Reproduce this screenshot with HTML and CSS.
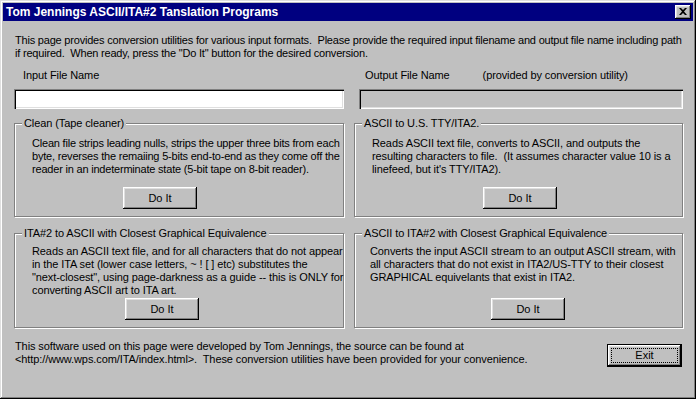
FILE: index.html
```html
<!DOCTYPE html>
<html lang="en">
<head>
    <meta charset="UTF-8">
    <title>Tom Jennings ASCII/ITA#2 Tanslation Programs</title>
    <link rel="stylesheet" href="styles.css">
</head>
<body>

<div class="window">
    <div class="titlebar">
        <span class="title">Tom Jennings ASCII/ITA#2 Tanslation Programs</span>
        <button class="close-btn" type="button">
            <svg width="8" height="7" viewBox="0 0 8 7"><path d="M0 0h2l2 2 2-2h2L5 3.5 8 7H6L4 5 2 7H0l3-3.5z" fill="#000"/></svg>
        </button>
    </div>

    <div class="content">
        <p class="intro">This page provides conversion utilities for various input formats.&nbsp; Please provide the required input filename and output file name including path<br>if required.&nbsp; When ready, press the "Do It" button for the desired conversion.</p>

        <div class="files">
            <label class="file-label" for="inFile">Input File Name</label>
            <label class="file-label out" for="outFile">Output File Name <span class="note">(provided by conversion utility)</span></label>
            <input class="field" id="inFile" type="text">
            <input class="field out" id="outFile" type="text" readonly>
        </div>

        <div class="groups">
            <fieldset class="group g-clean">
                <legend>Clean (Tape cleaner)</legend>
                <p class="desc">Clean file strips leading nulls, strips the upper three bits from each<br>byte, reverses the remaiing 5-bits end-to-end as they come off the<br>reader in an indeterminate state (5-bit tape on 8-bit reader).</p>
                <button class="btn" type="button">Do It</button>
            </fieldset>

            <fieldset class="group g-tty">
                <legend>ASCII to U.S. TTY/ITA2.</legend>
                <p class="desc">Reads ASCII text file, converts to ASCII, and outputs the<br>resulting characters to file.&nbsp; (It assumes character value 10 is a<br>linefeed, but it's TTY/ITA2).</p>
                <button class="btn" type="button">Do It</button>
            </fieldset>

            <fieldset class="group g-ita">
                <legend>ITA#2 to ASCII with Closest Graphical Equivalence</legend>
                <p class="desc">Reads an ASCII text file, and for all characters that do not appear<br>in the ITA set (lower case letters, ~ ! [ ] etc) substitutes the<br>"next-closest", using page-darkness as a guide -- this is ONLY for<br>converting ASCII art to ITA art.</p>
                <button class="btn" type="button">Do It</button>
            </fieldset>

            <fieldset class="group g-ascii">
                <legend>ASCII to ITA#2 with Closest Graphical Equivalence</legend>
                <p class="desc">Converts the input ASCII stream to an output ASCII stream, with<br>all characters that do not exist in ITA2/US-TTY to their closest<br>GRAPHICAL equivelants that exist in ITA2.</p>
                <button class="btn" type="button">Do It</button>
            </fieldset>
        </div>

        <div class="footer">
            <p class="credits">This software used on this page were developed by Tom Jennings, the source can be found at<br>&lt;http://www.wps.com/ITA/index.html&gt;.&nbsp; These conversion utilities have been provided for your convenience.</p>
            <button class="btn exit" type="button"><span class="focus">Exit</span></button>
        </div>
    </div>
</div>

</body>
</html>
```

FILE: styles.css
```css
body {
    margin: 0;
    font-family: "Liberation Sans", Arial, sans-serif;
    font-size: 11px;
    line-height: 13px;
    letter-spacing: -0.1px;
    color: #000;
    background-color: #c0c0c0;
}

.window {
    width: 696px;
    height: 399px;
    box-sizing: border-box;
    padding: 3px;
    background-color: #c0c0c0;
    box-shadow: inset -1px -1px #000, inset 1px 1px #dfdfdf,
                inset -2px -2px #808080, inset 2px 2px #fff;
}

/* title bar */
.titlebar {
    height: 18px;
    display: flex;
    align-items: center;
    justify-content: space-between;
    padding: 0 2px 0 3px;
    background-color: #000080;
}

.title {
    color: #fff;
    font-weight: bold;
    font-size: 12px;
    letter-spacing: 0;
}

.close-btn {
    width: 16px;
    height: 14px;
    padding: 0;
    border: none;
    display: flex;
    align-items: center;
    justify-content: center;
    background-color: #c0c0c0;
    box-shadow: inset -1px -1px #000, inset 1px 1px #fff,
                inset -2px -2px #808080, inset 2px 2px #dfdfdf;
}

.close-btn svg {
    display: block;
    margin-top: -1px;
}

/* main area */
.content {
    padding: 0 11px 0 11px;
}

p {
    margin: 0;
    white-space: nowrap;
}

.intro {
    margin-top: 13px;
    padding-left: 1px;
    letter-spacing: -0.2px;
}

.files {
    display: grid;
    grid-template-columns: 330px 330px;
    column-gap: 9px;
    row-gap: 7px;
    margin-top: 9px;
}

.file-label {
    padding-left: 9px;
}

.file-label.out {
    padding-left: 12px;
}

.note {
    margin-left: 30px;
}

.field {
    height: 20px;
    box-sizing: border-box;
    margin: 0;
    border: none;
    padding: 2px 4px;
    font: inherit;
    background-color: #fff;
    box-shadow: inset 1px 1px #808080, inset 2px 2px #000,
                inset -1px -1px #fff, inset -2px -2px #dfdfdf;
    outline: none;
}

.field.out {
    margin-left: 6px;
    background-color: #c0c0c0;
}

/* group boxes */
.groups {
    display: grid;
    grid-template-columns: 330px 329px;
    grid-template-rows: 100px 101px;
    column-gap: 10px;
    row-gap: 10px;
    margin-top: 8px;
}

.group {
    margin: 0;
    padding: 0;
    min-width: 0;
    display: flex;
    flex-direction: column;
    align-items: flex-start;
    border: 1px solid #808080;
    box-shadow: 1px 1px 0 #fff, inset 1px 1px 0 #fff;
}

.group legend {
    margin-left: 7px;
    padding: 0 2px;
    background-color: #c0c0c0;
    white-space: nowrap;
}

.desc {
    margin-top: 7px;
    padding-left: 17px;
}

.g-clean .desc {
    letter-spacing: -0.2px;
}

.g-ita .desc,
.g-ascii .desc {
    margin-top: 5px;
    padding-left: 17px;
}

.g-ascii .desc {
    padding-left: 15px;
}

.btn {
    width: 74px;
    height: 22px;
    margin-top: auto;
    margin-bottom: 7px;
    padding: 0;
    border: none;
    font: inherit;
    color: #000;
    background-color: #c0c0c0;
    box-shadow: inset -1px -1px #000, inset 1px 1px #fff,
                inset -2px -2px #808080, inset 2px 2px #dfdfdf;
    cursor: pointer;
}

.g-clean .btn { margin-left: 108px; }
.g-tty .btn { margin-left: 128px; }
.g-ita .btn { margin-left: 110px; }
.g-ascii .btn { margin-left: 136px; }

/* footer */
.footer {
    display: flex;
    justify-content: space-between;
    align-items: flex-start;
    margin-top: 12px;
}

.credits {
    padding-left: 1px;
}

.btn.exit {
    width: 75px;
    height: 23px;
    margin: 4px 0 0 0;
    padding: 4px;
    box-shadow: inset 0 0 0 1px #000, inset -2px -2px #000, inset 2px 2px #fff,
                inset -3px -3px #808080, inset 3px 3px #dfdfdf;
}

.focus {
    display: block;
    height: 100%;
    box-sizing: border-box;
    border: 1px dotted #000;
    line-height: 13px;
}
```
